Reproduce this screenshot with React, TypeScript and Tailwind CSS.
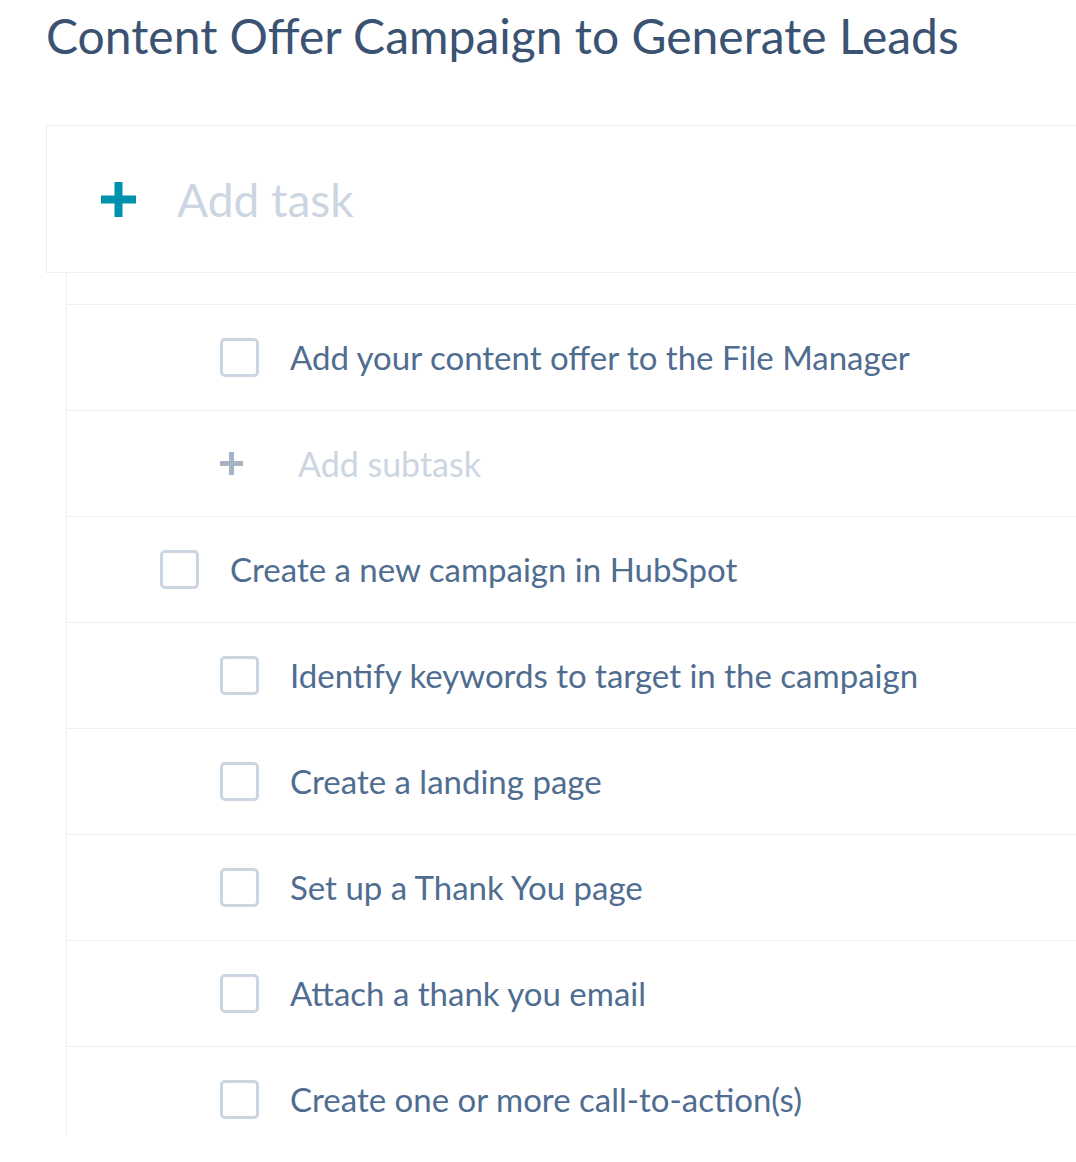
import React from 'react';

type Row =
  | { kind: 'task'; label: string }
  | { kind: 'subtask'; label: string }
  | { kind: 'addSubtask' };

const rows: Row[] = [
  { kind: 'subtask', label: 'Add your content offer to the File Manager' },
  { kind: 'addSubtask' },
  { kind: 'task', label: 'Create a new campaign in HubSpot' },
  { kind: 'subtask', label: 'Identify keywords to target in the campaign' },
  { kind: 'subtask', label: 'Create a landing page' },
  { kind: 'subtask', label: 'Set up a Thank You page' },
  { kind: 'subtask', label: 'Attach a thank you email' },
  { kind: 'subtask', label: 'Create one or more call-to-action(s)' },
];

const Checkbox = () => (
  <span className="block w-[39px] h-[39px] shrink-0 rounded-[5px] border-[3px] border-[#cbd6e2] bg-white" />
);

const PlusIcon: React.FC<{ size: number; stroke: number; color: string }> = ({ size, stroke, color }) => (
  <svg width={size} height={size} viewBox={`0 0 ${size} ${size}`} className="shrink-0">
    <rect x={(size - stroke) / 2} y={0} width={stroke} height={size} fill={color} />
    <rect x={0} y={(size - stroke) / 2} width={size} height={stroke} fill={color} />
  </svg>
);

const TaskRow: React.FC<{ row: Row }> = ({ row }) => {
  if (row.kind === 'addSubtask') {
    return (
      <div className="h-[106px] border-t border-[#eaf0f6] flex items-center pl-[153px]">
        <PlusIcon size={23} stroke={5} color="#a5b4c5" />
        <span className="ml-[55px] text-[34px] text-[#cbd6e2]">Add subtask</span>
      </div>
    );
  }
  return (
    <div
      className={`h-[106px] border-t border-[#eaf0f6] flex items-center ${
        row.kind === 'task' ? 'pl-[93px]' : 'pl-[153px]'
      }`}
    >
      <Checkbox />
      <span className="ml-[31px] text-[33px] text-[#4f6d90] whitespace-nowrap">{row.label}</span>
    </div>
  );
};

export default function App() {
  return (
    <div
      className="w-[1076px] h-[1162px] bg-white overflow-hidden pl-[46px]"
      style={{ fontFamily: 'Lato, "Noto Sans", sans-serif' }}
    >
      <h1 className="pt-[6px] text-[48px] leading-[60px] text-[#3b5372] whitespace-nowrap">
        Content Offer Campaign to Generate Leads
      </h1>

      <div className="mt-[59px] w-[1100px] h-[148px] border border-r-0 border-[#eaf0f6] flex items-center pl-[54px]">
        <PlusIcon size={35} stroke={8} color="#0091ae" />
        <span className="ml-[41px] text-[46px] text-[#cbd6e2]">Add task</span>
      </div>

      <div className="ml-[20px] h-[862px] border-l border-[#eaf0f6] overflow-hidden">
        <div className="h-[31px]" />
        {rows.map((row, i) => (
          <TaskRow key={i} row={row} />
        ))}
      </div>
    </div>
  );
}
